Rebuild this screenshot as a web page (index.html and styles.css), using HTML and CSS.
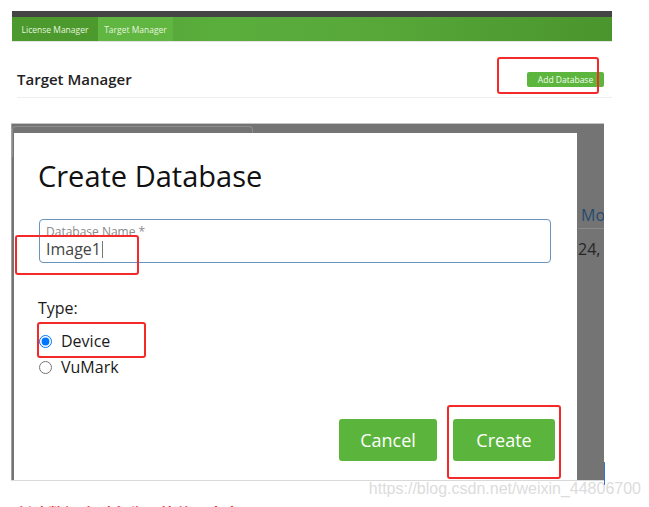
FILE: index.html
```html
<!DOCTYPE html>
<html lang="en">
<head>
<meta charset="utf-8">
<title>Target Manager</title>
<link rel="stylesheet" href="styles.css">
</head>
<body>
<div class="shot">
  <div class="topbar"></div>
  <nav class="nav">
    <a class="tab">License Manager</a>
    <a class="tab active">Target Manager</a>
  </nav>
  <header class="page-head">
    <h1>Target Manager</h1>
    <button class="btn-add">Add Database</button>
  </header>
  <section class="backdrop">
    <div class="behind">
      <div class="bg-card"></div>
      <div class="bg-table">
        <div class="bg-th">Modified</div>
        <div class="bg-td">24, 2020</div>
      </div>
    </div>
    <div class="modal">
      <h2>Create Database</h2>
      <label class="field">
        <span class="field-label">Database Name *</span>
        <span class="field-value">Image1<span class="caret"></span></span>
      </label>
      <div class="type-label">Type:</div>
      <label class="radio"><input type="radio" name="type" checked>Device</label>
      <label class="radio"><input type="radio" name="type">VuMark</label>
      <div class="actions">
        <button class="btn btn-cancel">Cancel</button>
        <button class="btn btn-create">Create</button>
      </div>
    </div>
  </section>
  <div class="watermark">https://blog.csdn.net/weixin_44806700</div>
  <p class="note">创建数据库时名称不能使用中文</p>

  <div class="cursor-line"></div>
  <div class="mark m1"></div>
  <div class="mark m2"></div>
  <div class="mark m3"></div>
  <div class="mark m4"></div>
</div>
</body>
</html>
```

FILE: styles.css
```css
html, body {
  margin: 0;
  padding: 0;
  background: #fff;
}
body {
  font-family: "Open Sans", "Noto Sans", sans-serif;
  color: #222;
}
.shot {
  position: relative;
  width: 649px;
  height: 507px;
  overflow: hidden;
  padding: 11px 0 0 11px;
  box-sizing: border-box;
}
.topbar {
  height: 6px;
  width: 600px;
  margin-left: 1px;
  background: #454545;
}
.nav {
  display: flex;
  height: 24px;
  width: 600px;
  margin-left: 1px;
  border-bottom: 1px solid #e4e4e4;
  background: linear-gradient(to right, #4f9e30 0%, #5aae3c 35%, #57a839 60%, #4a952d 100%);
}
.tab {
  display: flex;
  align-items: center;
  justify-content: center;
  font-size: 8.5px;
  color: #e6f4de;
  background: #4c9a2e;
  width: 86px;
}
.tab.active {
  background: #60b641;
  width: 75px;
}
.page-head {
  display: flex;
  align-items: center;
  justify-content: space-between;
  margin-left: 6px;
  width: 587px;
  height: 36px;
  padding: 19px 8px 0 0;
  box-sizing: content-box;
  border-bottom: 1px solid #eeeeee;
}
.page-head h1 {
  margin: 0;
  font-size: 15px;
  font-weight: 600;
  color: #222;
}
.btn-add {
  width: 77px;
  height: 15px;
  padding: 0;
  border: none;
  border-radius: 2px;
  background: #5cb53c;
  color: #f4fbf0;
  font-family: "Open Sans", sans-serif;
  font-size: 8.5px;
}
.backdrop {
  position: relative;
  margin-top: 25px;
  width: 593px;
  height: 356px;
  box-sizing: content-box;
  background: #747474;
  border-top: 1px solid #c4c4c4;
  border-bottom: 1px solid #d9d9d9;
  overflow: hidden;
}
.backdrop::before {
  content: "";
  position: absolute;
  left: 0;
  top: 0;
  bottom: 0;
  width: 1px;
  background: #a2a2a2;
}
.behind {
  display: flex;
  height: 100%;
}
.bg-card {
  flex: 0 0 239px;
  height: 30px;
  margin: 2px 0 0 1px;
  border: 1px solid #8e8e8e;
  border-bottom: none;
  border-radius: 4px 4px 0 0;
}
.bg-table {
  flex: 0 0 auto;
  margin-left: 325px;
  padding-top: 80px;
  white-space: nowrap;
  font-size: 16px;
}
.bg-th {
  line-height: 22px;
  padding: 0 0 2px 3px;
  color: #244b70;
  border-bottom: 1px solid #8a8a8a;
}
.bg-td {
  margin-top: 9px;
  line-height: 22px;
  color: #262626;
}
.modal {
  position: absolute;
  left: 3px;
  top: 9px;
  right: 27px;
  bottom: 0;
  background: #fff;
  padding: 26px 22px 0 24px;
}
.modal h2 {
  margin: 0;
  font-size: 29px;
  font-weight: 400;
  line-height: 34px;
  color: #111;
}
.field {
  display: block;
  box-sizing: border-box;
  width: 512px;
  margin: 26px 0 0 1px;
  padding: 5px 6px 3px 6px;
  border: 1px solid #6a93bd;
  border-radius: 4px;
}
.field-label {
  display: block;
  font-size: 12px;
  line-height: 14px;
  color: #8a8a8a;
}
.field-value {
  display: block;
  font-size: 16px;
  line-height: 20px;
  color: #444;
}
.caret {
  display: inline-block;
  width: 1px;
  height: 17px;
  margin-left: 1px;
  vertical-align: -3px;
  background: #777;
}
.type-label {
  margin-top: 34px;
  font-size: 16px;
  line-height: 22px;
  color: #1a1a1a;
}
.radio {
  display: flex;
  align-items: center;
  font-size: 16px;
  line-height: 26px;
  color: #1a1a1a;
}
.type-label + .radio {
  margin-top: 9px;
}
.radio input {
  width: 13px;
  height: 13px;
  margin: 0 9px 0 1px;
}
.actions {
  display: flex;
  justify-content: flex-end;
  gap: 16px;
  margin-top: 39px;
}
.btn {
  height: 42px;
  padding: 0;
  border: none;
  border-radius: 3px;
  background: #5bb53d;
  color: #fff;
  font-family: "Open Sans", sans-serif;
  font-size: 18px;
}
.btn-cancel { width: 98px; }
.btn-create { width: 102px; }
.watermark {
  margin-top: -1px;
  padding-right: 8px;
  text-align: right;
  font-family: "Liberation Sans", Arial, sans-serif;
  font-size: 16px;
  line-height: 18px;
  color: #dcdcdc;
}
.note {
  margin: 5px 0 0 5px;
  font-family: "Noto Sans CJK SC", sans-serif;
  font-size: 16px;
  font-weight: 700;
  line-height: 20px;
  color: #f03030;
  white-space: nowrap;
}
.cursor-line {
  position: absolute;
  left: 604px;
  top: 462px;
  width: 1px;
  height: 23px;
  background: #3a6fd8;
}
.mark {
  position: absolute;
  box-sizing: border-box;
  border: 2px solid #f42a2a;
  border-radius: 3px;
}
.m1 { left: 497px; top: 57px; width: 102px; height: 37px; }
.m2 { left: 15px; top: 235px; width: 124px; height: 40px; }
.m3 { left: 37px; top: 322px; width: 109px; height: 36px; }
.m4 { left: 447px; top: 405px; width: 114px; height: 74px; }
```
